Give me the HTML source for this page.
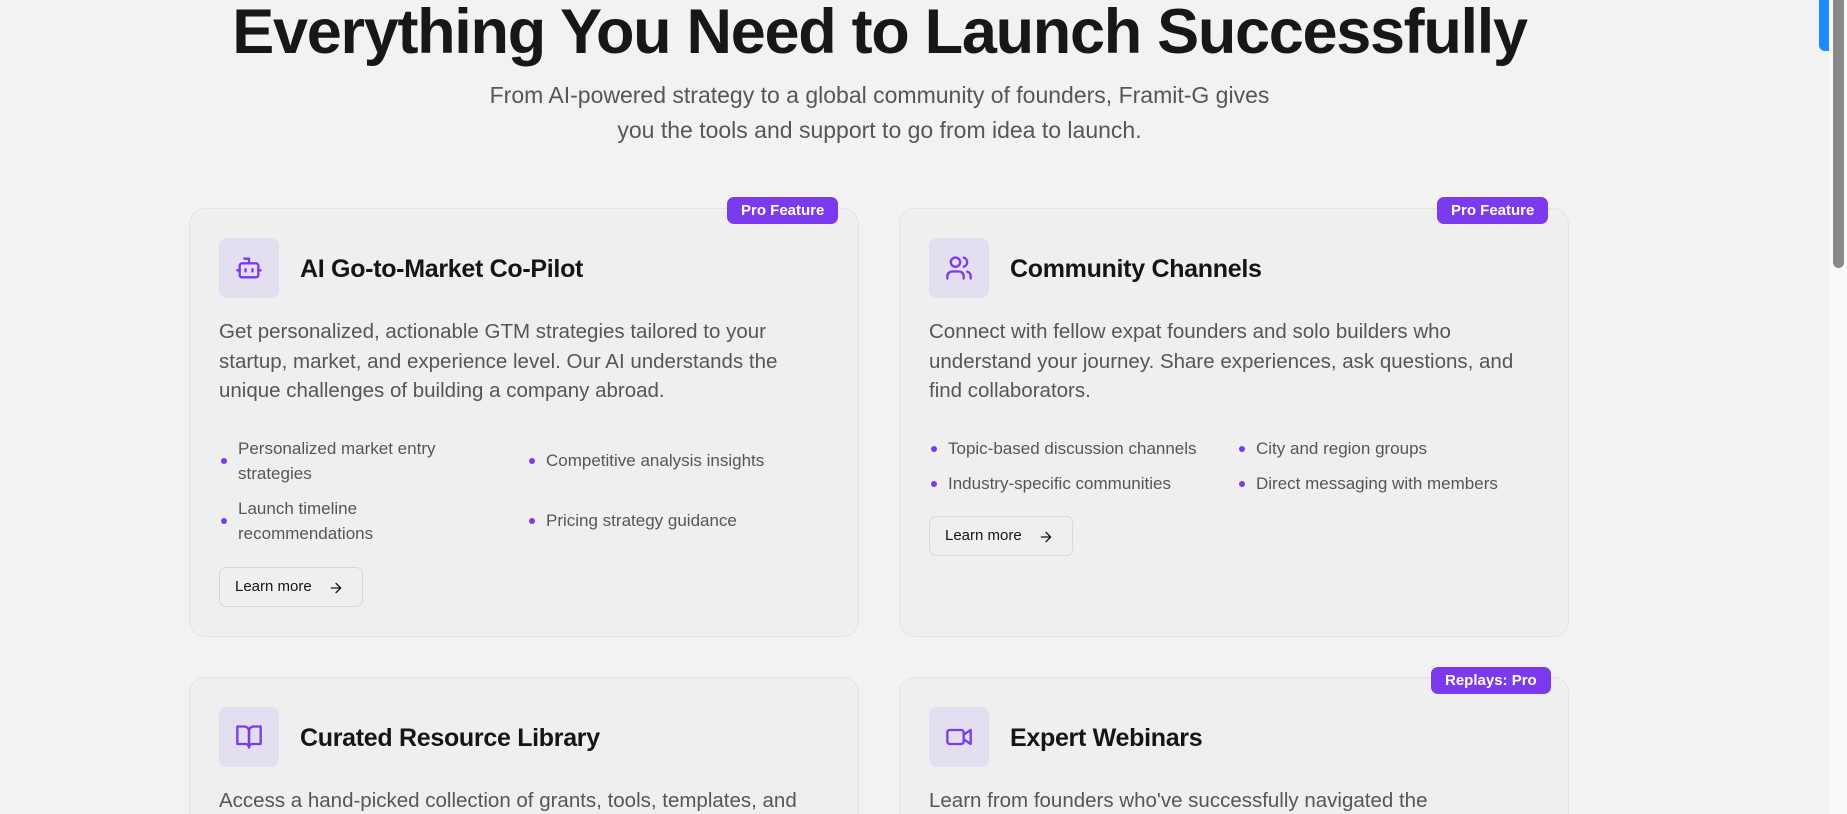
<!DOCTYPE html>
<html><head><meta charset="utf-8"><style>
*{box-sizing:border-box;margin:0;padding:0}
html,body{width:1847px;height:814px;overflow:hidden}
body{background:#f2f2f3;font-family:"Liberation Sans",sans-serif;position:relative;color:#151518}
.sb{position:absolute;right:0;top:0;width:18px;height:814px;background:#fafafa}
.thumb{position:absolute;right:3px;top:0;width:11px;height:268px;background:#8a8a8a;border-radius:0 0 6px 6px}
.blue{position:absolute;left:1819px;top:0;width:10px;height:51px;background:#1a8cff;border-radius:0 0 0 6px}
h1{position:absolute;left:0;width:1759px;top:-4px;text-align:center;font-size:63px;font-weight:700;letter-spacing:-1.3px;color:#171717;white-space:nowrap}
.sub{position:absolute;left:0;width:1759px;top:78px;text-align:center;font-size:23px;line-height:35px;color:#55555c}
.card{position:absolute;width:670px;background:#efefef;border:1px solid #e3e3e5;border-radius:16px}
.card.cut{border-bottom:none;border-radius:16px 16px 0 0}
.badge{position:absolute;background:#7c3aed;color:#fff;font-size:15px;font-weight:700;height:27px;line-height:27px;padding:0 14px;border-radius:7px}
.ib{position:absolute;left:29px;top:29px;width:60px;height:60px;background:#e3dff0;border-radius:8px;display:flex;align-items:center;justify-content:center}
.t{position:absolute;left:110px;top:46px;font-size:25px;font-weight:700;letter-spacing:-.3px}
.d{position:absolute;left:29px;top:108px;width:620px;font-size:20.5px;line-height:29.5px;color:#55555c;white-space:nowrap}
.li{position:absolute;font-size:17px;line-height:25px;color:#55555c;padding-left:17px}
.li:before{content:"";position:absolute;left:0;top:50%;margin-top:-3px;width:6px;height:6px;border-radius:50%;background:#7c3aed}
.btn{position:absolute;left:29px;width:144px;height:40px;border:1px solid #d8d8dc;border-radius:7px;font-size:15px;color:#151518;padding-left:15px;line-height:38px}
.btn svg{position:absolute;left:108px;top:12px}
</style></head><body>
<h1>Everything You Need to Launch Successfully</h1>
<div class="sub">From AI-powered strategy to a global community of founders, Framit-G gives<br>you the tools and support to go from idea to launch.</div>

<div class="card" style="left:189px;top:208px;height:429px">
<div class="ib"><svg width="28" height="28" viewBox="0 0 24 24" fill="none" stroke="#7c3aed" stroke-width="2" stroke-linecap="round" stroke-linejoin="round"><path d="M12 8V4H8"/><rect x="4" y="8" width="16" height="12" rx="2"/><path d="M2 14h2M20 14h2M15 13v2M9 13v2"/></svg></div>
<div class="t">AI Go-to-Market Co-Pilot</div>
<div class="d">Get personalized, actionable GTM strategies tailored to your<br>startup, market, and experience level. Our AI understands the<br>unique challenges of building a company abroad.</div>
<div class="li" style="left:31px;top:227px;width:260px">Personalized market entry strategies</div>
<div class="li" style="left:339px;top:239px">Competitive analysis insights</div>
<div class="li" style="left:31px;top:287px;width:260px">Launch timeline recommendations</div>
<div class="li" style="left:339px;top:299px">Pricing strategy guidance</div>
<div class="btn" style="top:358px">Learn more<svg width="16" height="16" viewBox="0 0 24 24" fill="none" stroke="#151518" stroke-width="2" stroke-linecap="round" stroke-linejoin="round"><path d="M5 12h14M12 5l7 7-7 7"/></svg></div>
</div>
<div class="badge" style="left:727px;top:197px">Pro Feature</div>

<div class="card" style="left:899px;top:208px;height:429px">
<div class="ib"><svg width="28" height="28" viewBox="0 0 24 24" fill="none" stroke="#7c3aed" stroke-width="2" stroke-linecap="round" stroke-linejoin="round"><path d="M16 21v-2a4 4 0 0 0-4-4H6a4 4 0 0 0-4 4v2"/><circle cx="9" cy="7" r="4"/><path d="M22 21v-2a4 4 0 0 0-3-3.87M16 3.13a4 4 0 0 1 0 7.75"/></svg></div>
<div class="t">Community Channels</div>
<div class="d">Connect with fellow expat founders and solo builders who<br>understand your journey. Share experiences, ask questions, and<br>find collaborators.</div>
<div class="li" style="left:31px;top:227px">Topic-based discussion channels</div>
<div class="li" style="left:339px;top:227px">City and region groups</div>
<div class="li" style="left:31px;top:262px">Industry-specific communities</div>
<div class="li" style="left:339px;top:262px">Direct messaging with members</div>
<div class="btn" style="top:307px">Learn more<svg width="16" height="16" viewBox="0 0 24 24" fill="none" stroke="#151518" stroke-width="2" stroke-linecap="round" stroke-linejoin="round"><path d="M5 12h14M12 5l7 7-7 7"/></svg></div>
</div>
<div class="badge" style="left:1437px;top:197px">Pro Feature</div>

<div class="card cut" style="left:189px;top:677px;height:137px;overflow:hidden">
<div class="ib"><svg width="28" height="28" viewBox="0 0 24 24" fill="none" stroke="#7c3aed" stroke-width="2" stroke-linecap="round" stroke-linejoin="round"><path d="M2 3h6a4 4 0 0 1 4 4v14a3 3 0 0 0-3-3H2z"/><path d="M22 3h-6a4 4 0 0 0-4 4v14a3 3 0 0 1 3-3h7z"/></svg></div>
<div class="t">Curated Resource Library</div>
<div class="d">Access a hand-picked collection of grants, tools, templates, and</div>
</div>

<div class="card cut" style="left:899px;top:677px;height:137px;overflow:hidden">
<div class="ib"><svg width="28" height="28" viewBox="0 0 24 24" fill="none" stroke="#7c3aed" stroke-width="2" stroke-linecap="round" stroke-linejoin="round"><rect x="2" y="6" width="14" height="12" rx="2"/><path d="M16 10l6-4v12l-6-4"/></svg></div>
<div class="t">Expert Webinars</div>
<div class="d">Learn from founders who've successfully navigated the</div>
</div>
<div class="badge" style="left:1431px;top:667px">Replays: Pro</div>

<div class="blue"></div>
<div class="sb"><div class="thumb"></div></div>
</body></html>
